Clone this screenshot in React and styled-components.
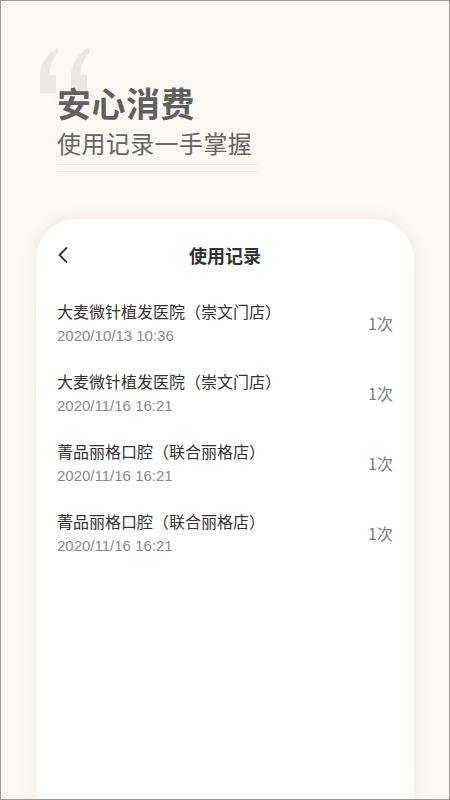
import React from 'react';
import styled, { createGlobalStyle } from 'styled-components';

const GlobalStyle = createGlobalStyle`
  html, body {
    margin: 0;
    padding: 0;
    background: #fcf8f3;
  }
  * {
    box-sizing: border-box;
  }
`;

const Frame = styled.div`
  width: 450px;
  height: 800px;
  display: flex;
  flex-direction: column;
  overflow: hidden;
  border: 1px solid #9c9791;
  background: #fcf8f3;
  font-family: "Noto Sans CJK SC", "Noto Sans", sans-serif;
`;

const Hero = styled.header`
  position: relative;
  padding: 82px 0 0 56px;
`;

const QuoteMark = styled.svg`
  position: absolute;
  left: 36px;
  top: 46px;
  width: 56px;
  height: 48px;
`;

const Title = styled.h1`
  position: relative;
  margin: 0;
  font-size: 34px;
  line-height: 40px;
  font-weight: 700;
  color: #606060;
  letter-spacing: 0.5px;
`;

const Subtitle = styled.p`
  position: relative;
  margin: 5px 0 0;
  font-size: 24px;
  line-height: 30px;
  font-weight: 400;
  color: #666;
  letter-spacing: 0.4px;
`;

const Rule = styled.div`
  width: 200px;
  height: 1px;
  margin-top: ${({ gap }) => gap}px;
  background: #efe9e2;
`;

const Card = styled.section`
  flex: 1;
  margin: 47px 35px 0;
  padding: 18px 21px 0;
  background: #fff;
  border-radius: 40px 40px 0 0;
  box-shadow: 0 0 16px rgba(150, 120, 80, 0.14);
`;

const CardHeader = styled.div`
  display: grid;
  grid-template-columns: 40px 1fr 40px;
  align-items: center;
  height: 36px;
`;

const BackButton = styled.button`
  display: flex;
  align-items: center;
  padding: 0 0 0 1px;
  border: 0;
  background: none;
  cursor: pointer;
`;

const HeaderTitle = styled.h2`
  margin: 0;
  text-align: center;
  font-size: 18px;
  line-height: 24px;
  font-weight: 700;
  color: #333;
`;

const RecordList = styled.ul`
  margin: 0;
  padding: 15px 0 0;
  list-style: none;
`;

const RecordRow = styled.li`
  display: flex;
  align-items: center;
  justify-content: space-between;
  height: 70px;
`;

const RecordInfo = styled.div`
  display: flex;
  flex-direction: column;
  gap: 4px;
`;

const StoreName = styled.span`
  font-size: 16px;
  line-height: 22px;
  color: #333;
`;

const UsedAt = styled.span`
  font-family: "Liberation Sans", "Noto Sans CJK SC", sans-serif;
  font-size: 15px;
  line-height: 20px;
  color: #888;
`;

const UseCount = styled.span`
  font-size: 16px;
  line-height: 22px;
  color: #7d7d7d;
`;

const records = [
  { name: '大麦微针植发医院（崇文门店）', time: '2020/10/13 10:36', count: 1 },
  { name: '大麦微针植发医院（崇文门店）', time: '2020/11/16 16:21', count: 1 },
  { name: '菁品丽格口腔（联合丽格店）', time: '2020/11/16 16:21', count: 1 },
  { name: '菁品丽格口腔（联合丽格店）', time: '2020/11/16 16:21', count: 1 },
];

const quotePath =
  'M20 1 C10 7 4 16 3 28 L3 46 L19 46 L19 28 L12 28 C13 19 16 11 22 5 Z';

export default function App() {
  return (
    <>
      <GlobalStyle />
      <Frame>
        <Hero>
          <QuoteMark viewBox="0 0 56 48">
            <path d={quotePath} fill="#ebe8e4" />
            <path d={quotePath} fill="#ebe8e4" transform="translate(31 0)" />
          </QuoteMark>
          <Title>安心消费</Title>
          <Subtitle>使用记录一手掌握</Subtitle>
          <Rule gap={6} />
          <Rule gap={6} />
        </Hero>
        <Card>
          <CardHeader>
            <BackButton aria-label="返回">
              <svg width="10" height="16" viewBox="0 0 10 16">
                <path d="M8.5 1 L1.5 8 L8.5 15" fill="none" stroke="#333" strokeWidth="1.8" strokeLinecap="round" strokeLinejoin="round" />
              </svg>
            </BackButton>
            <HeaderTitle>使用记录</HeaderTitle>
            <span />
          </CardHeader>
          <RecordList>
            {records.map((r, i) => (
              <RecordRow key={i}>
                <RecordInfo>
                  <StoreName>{r.name}</StoreName>
                  <UsedAt>{r.time}</UsedAt>
                </RecordInfo>
                <UseCount>{r.count}次</UseCount>
              </RecordRow>
            ))}
          </RecordList>
        </Card>
      </Frame>
    </>
  );
}
